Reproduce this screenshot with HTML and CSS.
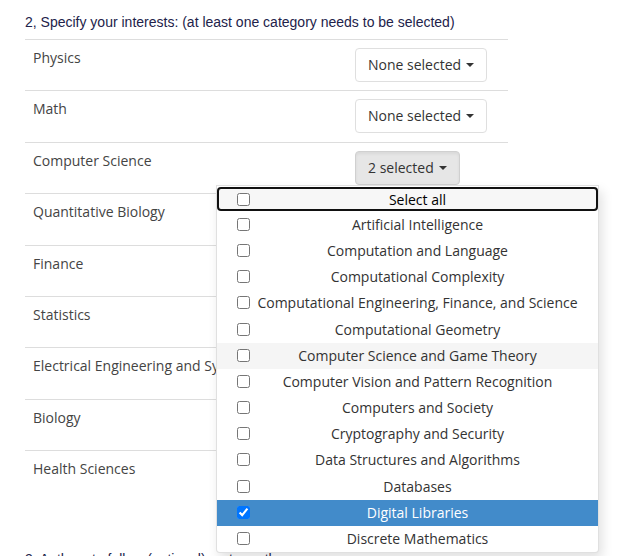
FILE: index.html
```html
<!DOCTYPE html>
<html>
<head>
<meta charset="utf-8">
<link rel="stylesheet" href="styles.css">
</head>
<body>
<div class="page">
  <p class="heading">2, Specify your interests: (at least one category needs to be selected)</p>
  <div class="table">
    <div class="row"><div class="label">Physics</div><div class="cell"><button class="btn">None selected <span class="caret"></span></button></div></div>
    <div class="row"><div class="label">Math</div><div class="cell"><button class="btn">None selected <span class="caret"></span></button></div></div>
    <div class="row"><div class="label">Computer Science</div>
      <div class="cell group">
        <button class="btn active">2 selected <span class="caret"></span></button>
        <ul class="menu">
          <li class="item focus"><input type="checkbox"><span>Select all</span></li>
          <li class="item"><input type="checkbox"><span>Artificial Intelligence</span></li>
          <li class="item"><input type="checkbox"><span>Computation and Language</span></li>
          <li class="item"><input type="checkbox"><span>Computational Complexity</span></li>
          <li class="item"><input type="checkbox"><span>Computational Engineering, Finance, and Science</span></li>
          <li class="item"><input type="checkbox"><span>Computational Geometry</span></li>
          <li class="item hover"><input type="checkbox"><span>Computer Science and Game Theory</span></li>
          <li class="item"><input type="checkbox"><span>Computer Vision and Pattern Recognition</span></li>
          <li class="item"><input type="checkbox"><span>Computers and Society</span></li>
          <li class="item"><input type="checkbox"><span>Cryptography and Security</span></li>
          <li class="item"><input type="checkbox"><span>Data Structures and Algorithms</span></li>
          <li class="item"><input type="checkbox"><span>Databases</span></li>
          <li class="item selected"><input type="checkbox" checked><span>Digital Libraries</span></li>
          <li class="item"><input type="checkbox"><span>Discrete Mathematics</span></li>
        </ul>
      </div>
    </div>
    <div class="row"><div class="label">Quantitative Biology</div><div class="cell"></div></div>
    <div class="row"><div class="label">Finance</div><div class="cell"></div></div>
    <div class="row"><div class="label">Statistics</div><div class="cell"></div></div>
    <div class="row"><div class="label">Electrical Engineering and Systems Science</div><div class="cell"></div></div>
    <div class="row"><div class="label">Biology</div><div class="cell"></div></div>
    <div class="row last"><div class="label">Health Sciences</div><div class="cell"></div></div>
  </div>
  <p class="heading next">3, Authors to follow (optional): enter author names</p>
</div>
</body>
</html>
```
FILE: styles.css
```css
html, body {
  margin: 0;
  padding: 0;
  background: #fff;
  overflow: hidden;
}
.page {
  padding: 14px 0 0 25px;
  width: 483px;
}
.heading {
  margin: 0 0 8px 0;
  font-family: "Liberation Sans", Arial, sans-serif;
  font-size: 14px;
  line-height: 17px;
  color: #22224a;
}
.heading.next {
  margin-top: 48px;
}
.table {
  border-top: 1px solid #dddddd;
}
.row {
  display: flex;
  border-bottom: 1px solid #dddddd;
  box-sizing: border-box;
  height: 51.4px;
}
.row.last {
  border-bottom: none;
}
.label {
  flex: 1;
  min-width: 0;
  padding: 8px 8px;
  font-family: "Open Sans", sans-serif;
  font-size: 14px;
  line-height: 20px;
  color: #444;
  white-space: nowrap;
  overflow: hidden;
}
.cell {
  width: 153px;
  flex: none;
  padding-top: 8px;
  position: relative;
}
.btn {
  font-family: "Open Sans", sans-serif;
  font-size: 14px;
  line-height: 20px;
  color: #333;
  background: #fff;
  border: 1px solid #dfdfdf;
  border-radius: 4px;
  padding: 6px 12px;
  display: flex;
  align-items: center;
  gap: 4px;
  height: 34px;
  box-sizing: border-box;
}
.btn.active {
  background: #e6e6e6;
  border-color: #d0d0d0;
  box-shadow: inset 0 2px 3px rgba(0,0,0,.06);
}
.caret {
  display: inline-block;
  width: 0;
  height: 0;
  border-top: 4px solid #333;
  border-left: 4px solid transparent;
  border-right: 4px solid transparent;
  margin-left: 1px;
}
.menu {
  position: absolute;
  top: 42px;
  left: -139px;
  width: 383px;
  box-sizing: border-box;
  margin: 0;
  padding: 1px 0 0 0;
  list-style: none;
  background: #fff;
  border: 1px solid rgba(0,0,0,.12);
  border-radius: 0 0 4px 4px;
  box-shadow: 3px 6px 12px rgba(0,0,0,.12);
  z-index: 10;
}
.item {
  position: relative;
  height: 26.2px;
  padding: 0 20px 0 40px;
  text-align: center;
  font-family: "Open Sans", sans-serif;
  font-size: 14px;
  line-height: 26px;
  color: #333;
  white-space: nowrap;
}
.item input {
  position: absolute;
  left: 20px;
  top: 6px;
  width: 13px;
  height: 13px;
  margin: 0;
}
.item.focus {
  height: 24px;
  line-height: 22px;
  margin: 0 0 1px 0;
  border: 2px solid #111;
  border-radius: 4px;
  color: #000;
  font-weight: 500;
  background: #f7f7f7;
  box-sizing: border-box;
}
.item.focus input {
  left: 18px;
  top: 4px;
}
.item.hover {
  background: #f5f5f5;
}
.item.selected {
  background: #428bca;
  color: #fff;
}
```
